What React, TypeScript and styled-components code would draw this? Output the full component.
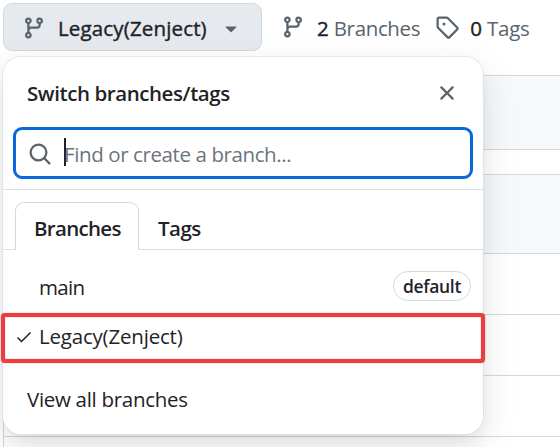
import React from "react";
import styled, { createGlobalStyle } from "styled-components";

const GlobalStyle = createGlobalStyle`
  * { box-sizing: border-box; }
  body {
    margin: 0;
    overflow: hidden;
    background: #fff;
    color: #1f2328;
    font-family: "Open Sans", "Noto Sans", sans-serif;
  }
  button { font: inherit; color: inherit; padding: 0; border: 0; background: none; }
`;

const icons = {
  branch:
    "M9.5 3.25a2.25 2.25 0 1 1 3 2.122V6A2.5 2.5 0 0 1 10 8.5H6a1 1 0 0 0-1 1v1.128a2.251 2.251 0 1 1-1.5 0V5.372a2.25 2.25 0 1 1 1.5 0v1.836A2.493 2.493 0 0 1 6 7h4a1 1 0 0 0 1-1v-.628A2.25 2.25 0 0 1 9.5 3.25Zm-6 0a.75.75 0 1 0 1.5 0 .75.75 0 0 0-1.5 0Zm8.25-.75a.75.75 0 1 0 0 1.5.75.75 0 0 0 0-1.5ZM4.25 12a.75.75 0 1 0 0 1.5.75.75 0 0 0 0-1.5Z",
  tag: "M1 7.775V2.75C1 1.784 1.784 1 2.75 1h5.025c.464 0 .91.184 1.238.513l6.25 6.25a1.75 1.75 0 0 1 0 2.474l-5.026 5.026a1.75 1.75 0 0 1-2.474 0l-6.25-6.25A1.752 1.752 0 0 1 1 7.775Zm1.5 0c0 .066.026.13.073.177l6.25 6.25a.25.25 0 0 0 .354 0l5.025-5.025a.25.25 0 0 0 0-.354l-6.25-6.25a.25.25 0 0 0-.177-.073H2.75a.25.25 0 0 0-.25.25ZM6 5a1 1 0 1 1 0 2 1 1 0 0 1 0-2Z",
  close:
    "M3.72 3.72a.75.75 0 0 1 1.06 0L8 6.94l3.22-3.22a.749.749 0 0 1 1.275.326.749.749 0 0 1-.215.734L9.06 8l3.22 3.22a.749.749 0 0 1-.326 1.275.749.749 0 0 1-.734-.215L8 9.06l-3.22 3.22a.751.751 0 0 1-1.042-.018.751.751 0 0 1-.018-1.042L6.94 8 3.72 4.78a.75.75 0 0 1 0-1.06Z",
  search:
    "M10.68 11.74a6 6 0 0 1-7.922-8.982 6 6 0 0 1 8.982 7.922l3.04 3.04a.749.749 0 0 1-.326 1.275.749.749 0 0 1-.734-.215ZM11.5 7a4.499 4.499 0 1 0-8.997 0A4.499 4.499 0 0 0 11.5 7Z",
  caret:
    "m4.427 7.427 3.396 3.396a.25.25 0 0 0 .354 0l3.396-3.396A.25.25 0 0 0 11.396 7H4.604a.25.25 0 0 0-.177.427Z",
};

const Glyph = styled.svg`
  display: block;
  flex: none;
  width: 24px;
  height: 24px;
  fill: #59636e;
`;

function Icon({ name }: { name: keyof typeof icons }) {
  return (
    <Glyph viewBox="0 0 16 16" aria-hidden="true">
      <path d={icons[name]} />
    </Glyph>
  );
}

const Page = styled.div`
  position: relative;
  width: 560px;
  height: 447px;
  overflow: hidden;
  display: flex;
  flex-direction: column;
`;

const Toolbar = styled.header`
  display: flex;
  flex: none;
  align-items: flex-start;
  height: 75px;
  padding: 3px 0 0 3px;
`;

const Label = styled.span<{
  $track?: number;
  $weight?: number;
  $size?: number;
  $color?: string;
  $medium?: boolean;
}>`
  white-space: nowrap;
  line-height: 30px;
  font-size: ${(p) => p.$size ?? 20.5}px;
  font-weight: ${(p) => p.$weight ?? 400};
  letter-spacing: ${(p) => p.$track ?? 0}px;
  color: ${(p) => p.$color ?? "#1f2328"};
  ${(p) => p.$medium && "-webkit-text-stroke: 0.4px currentColor;"}
`;

const BranchButton = styled.button`
  display: flex;
  align-items: center;
  width: 259px;
  height: 48px;
  padding: 2px 18px 0;
  border: 1px solid #d1d9e0;
  border-radius: 9px;
  background: #e6eaef;
  ${Label} { flex: 1; text-align: left; margin-left: 12px; }
`;

const CountLink = styled.a<{ $start: number; $gap: number }>`
  display: flex;
  gap: ${(p) => p.$gap}px;
  margin-left: ${(p) => p.$start}px;
  padding-top: 12px;
  ${Label} { margin-top: -2px; }
`;

const FileTable = styled.main`
  flex: none;
  margin-left: 3px;
  border-left: 1px solid #d1d9e0;
`;

const TableRow = styled.div<{ $height: number; $shaded?: boolean }>`
  height: ${(p) => p.$height}px;
  border-top: 1px solid #d1d9e0;
  background: ${(p) => (p.$shaded ? "#f6f8fa" : "#fff")};
`;

const Popover = styled.section`
  position: absolute;
  left: 3px;
  top: 57px;
  width: 480px;
  height: 377px;
  border-radius: 18px;
  background: #fff;
  box-shadow: 0 0 0 1px rgba(209, 217, 224, 0.5), 0 9px 18px -4px rgba(37, 41, 46, 0.08),
    0 12px 36px rgba(37, 41, 46, 0.12);
`;

const PopoverHeader = styled.div`
  display: flex;
  justify-content: space-between;
  align-items: center;
  height: 70px;
  padding: 2px 24px 0;
`;

const SearchField = styled.label`
  display: flex;
  align-items: center;
  height: 52px;
  margin: 0 10px;
  padding: 2px 0 0 12px;
  border: 3px solid #0969da;
  border-radius: 9px;
`;

const Caret = styled.span`
  width: 2px;
  height: 28px;
  margin: 0 -2px 4px 12px;
  background: #1f2328;
`;

const Tabs = styled.nav`
  display: flex;
  height: 61px;
  margin-top: 10px;
  padding: 12px 0 0 12px;
  border-top: 1px solid #dadfe4;
  border-bottom: 1px solid #dadfe4;
`;

const Tab = styled.button<{ $active?: boolean; $width: number }>`
  width: ${(p) => p.$width}px;
  height: ${(p) => (p.$active ? 48 : 47)}px;
  padding: 4px 0 0 19px;
  text-align: left;
  ${(p) =>
    p.$active &&
    `border: 1px solid #d1d9e0;
     border-bottom: 0;
     border-radius: 9px 9px 0 0;
     background: #fff;
     padding: 3px 0 0 18px;`}
`;

const BranchRow = styled.div<{ $height: number; $lift?: number }>`
  display: flex;
  align-items: center;
  height: ${(p) => p.$height}px;
  padding: 0 12px ${(p) => p.$lift ?? 0}px 13px;
`;

const BranchName = styled(Label)`
  padding-top: 2px;
`;

const CheckSlot = styled.span`
  flex: none;
  width: 23px;
  svg {
    display: block;
    width: 16px;
    height: 12px;
    margin-top: 2px;
    fill: none;
    stroke: #1f2328;
    stroke-width: 1.5;
  }
`;

const Badge = styled.span`
  display: flex;
  justify-content: center;
  align-items: center;
  width: 78px;
  height: 30px;
  margin-left: auto;
  border: 1px solid #d1d9e0;
  border-radius: 15px;
`;

const Footer = styled.div`
  padding: 20px 24px;
`;

const Highlight = styled.div`
  position: absolute;
  left: 1px;
  top: 313px;
  width: 484px;
  height: 50px;
  border: 4px solid #f03c3c;
  border-radius: 4px;
  box-shadow: 0 0 1px rgba(90, 20, 20, 0.7), inset 0 0 1px rgba(90, 20, 20, 0.7);
`;

const rows = [
  { height: 74, shaded: true },
  { height: 25 },
  { height: 79, shaded: true },
  { height: 61 },
  { height: 61 },
  { height: 61 },
  { height: 61 },
];

export default function App() {
  return (
    <Page>
      <GlobalStyle />
      <Toolbar>
        <BranchButton>
          <Icon name="branch" />
          <Label $medium $track={0.15}>Legacy(Zenject)</Label>
          <Icon name="caret" />
        </BranchButton>
        <CountLink $start={19} $gap={12}>
          <Icon name="branch" />
          <Label $color="#59636e" $track={-0.35}>
            <Label $medium>2</Label> Branches
          </Label>
        </CountLink>
        <CountLink $start={15} $gap={11}>
          <Icon name="tag" />
          <Label $color="#59636e" $track={-0.25}>
            <Label $medium>0</Label> Tags
          </Label>
        </CountLink>
      </Toolbar>
      <FileTable>
        {rows.map((row, i) => (
          <TableRow key={i} $height={row.height} $shaded={row.shaded} />
        ))}
      </FileTable>
      <Popover>
        <PopoverHeader>
          <Label $weight={600} $track={-0.42}>Switch branches/tags</Label>
          <Icon name="close" />
        </PopoverHeader>
        <SearchField>
          <Icon name="search" />
          <Caret />
          <Label $color="#6b747e" $track={-0.4}>Find or create a branch...</Label>
        </SearchField>
        <Tabs>
          <Tab $active $width={124}>
            <Label $weight={600} $track={-0.7}>Branches</Label>
          </Tab>
          <Tab $width={80}>
            <Label $weight={600} $track={-0.5}>Tags</Label>
          </Tab>
        </Tabs>
        <BranchRow $height={72}>
          <CheckSlot />
          <BranchName $track={-0.65}>main</BranchName>
          <Badge>
            <Label $weight={600} $size={17.5} $track={-0.35}>default</Label>
          </Badge>
        </BranchRow>
        <BranchRow $height={42} $lift={15}>
          <CheckSlot>
            <svg viewBox="0 0 16 12">
              <path d="M1.5 6.5 5.5 10.5 14.5 1.5" />
            </svg>
          </CheckSlot>
          <Label $track={-0.2}>Legacy(Zenject)</Label>
        </BranchRow>
        <Footer>
          <Label $track={-0.3}>View all branches</Label>
        </Footer>
      </Popover>
      <Highlight />
    </Page>
  );
}
